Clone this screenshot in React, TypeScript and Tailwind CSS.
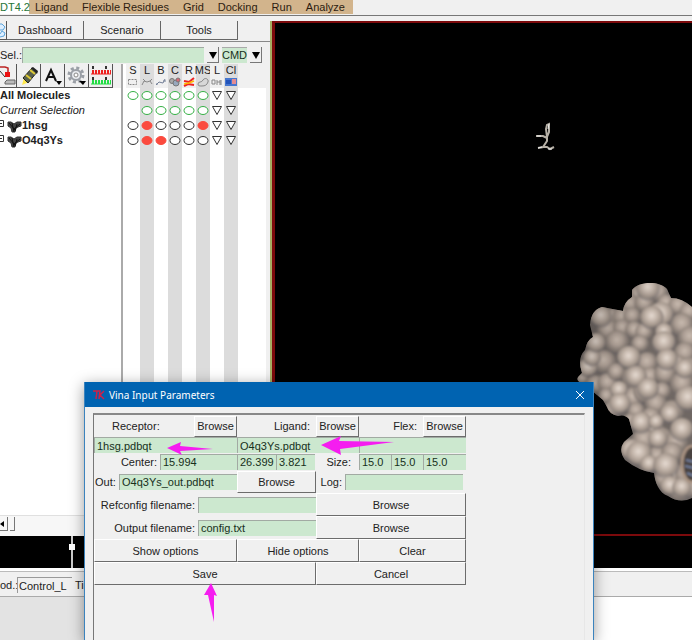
import React from "react";

const menus = ["Ligand", "Flexible Residues", "Grid", "Docking", "Run", "Analyze"];

type Mark = "none" | "green" | "open" | "red" | "tri";

const columns: { head: string; name: string; shaded: boolean; marks: Mark[] }[] = [
  { head: "S", name: "Select", shaded: false, marks: ["green", "none", "open", "open"] },
  { head: "L", name: "Lines", shaded: true, marks: ["green", "green", "red", "red"] },
  { head: "B", name: "Sticks and balls", shaded: false, marks: ["green", "green", "open", "red"] },
  { head: "C", name: "Spheres", shaded: true, marks: ["green", "green", "open", "open"] },
  { head: "R", name: "Ribbon", shaded: false, marks: ["green", "green", "open", "open"] },
  { head: "MS", name: "Surface", shaded: true, marks: ["green", "green", "red", "open"] },
  { head: "L", name: "Labels", shaded: false, marks: ["tri", "tri", "tri", "tri"] },
  { head: "Cl", name: "Color", shaded: true, marks: ["tri", "tri", "tri", "tri"] },
];

// Background lumps of the surface: x, y, radius
const lumps: number[][] = [
  [78, 24, 9], [98, 22, 10], [70, 34, 10], [84, 33, 10], [106, 33, 9], [118, 36, 10], [129, 42, 10],
  [41, 46, 11], [52, 47, 9], [62, 47, 10], [72, 46, 9], [48, 60, 11], [62, 58, 9], [74, 60, 9], [84, 62, 9],
  [36, 74, 10], [57, 72, 12], [80, 74, 9], [122, 55, 12], [130, 68, 12], [125, 83, 11],
  [44, 92, 12], [22, 109, 7], [35, 115, 10], [47, 113, 10], [56, 102, 9], [87, 93, 11], [118, 95, 10], [129, 99, 12],
  [75, 108, 13], [90, 106, 9], [105, 104, 11], [122, 114, 12], [46, 126, 8], [53, 139, 9], [73, 128, 11],
  [86, 121, 13], [102, 121, 9], [96, 134, 11], [112, 142, 12], [76, 141, 9], [71, 151, 8], [91, 147, 10],
  [94, 159, 10], [101, 170, 13], [116, 173, 12], [84, 170, 12], [89, 193, 11], [97, 186, 10], [112, 183, 11],
  [115, 206, 12], [104, 209, 10], [120, 220, 12], [130, 218, 10], [125, 205, 10],
];

// Foremost atoms
const atoms: number[][] = [
  [88, 19, 12], [101, 45, 13], [92, 48, 12], [104, 62, 9], [104, 73, 12], [69, 88, 12], [28, 98, 10], [32, 88, 9],
  [41, 47, 11], [36, 73, 10], [107, 90, 11], [76, 107, 11], [59, 120, 9], [60, 134, 11], [88, 119, 11], [125, 99, 10],
  [110, 144, 10], [81, 153, 11], [96, 152, 8], [128, 129, 13], [122, 160, 12], [98, 169, 10], [71, 180, 11],
  [79, 184, 13], [89, 194, 9], [106, 196, 13], [110, 216, 10], [122, 218, 10],
];

function ToolButton({ label, children }: { label: string; children: React.ReactNode }) {
  return (
    <button aria-label={label} className="flex h-6 w-6 shrink-0 items-center justify-center border-r border-b border-[#555] bg-[#f0f0f0]">
      {children}
    </button>
  );
}

function MarkGlyph({ mark }: { mark: Mark }) {
  if (mark === "none") return <span className="block h-[15px]" />;
  return (
    <svg viewBox="0 0 14 15" className="block h-[15px] w-[14px]">
      {mark === "tri" ? (
        <path d="M2.5 3.5h9L7 11.5z" fill="#fff" stroke="#333" />
      ) : (
        <ellipse
          cx="7" cy="7.5" rx="5" ry="4"
          fill={mark === "red" ? "#fb4a3e" : "#fff"}
          stroke={mark === "green" ? "#35b045" : mark === "red" ? "#fb4a3e" : "#333"}
        />
      )}
    </svg>
  );
}

function ColumnIcon({ index }: { index: number }) {
  return (
    <svg viewBox="0 0 14 12" className="block h-3 w-[14px]" fill="none" stroke="#888">
      {index === 0 && <rect x="2.5" y="3.5" width="8" height="5" strokeDasharray="2 1" />}
      {index === 1 && <path d="M2 9l2-4 3 1 3-1 2 3M3 3l2 2M10 5l2-2" />}
      {index === 2 && <path d="M2 9l3-3 4 1 2-4M2 8h2M9 5h3" stroke="#758198" />}
      {index === 3 && (
        <g stroke="#777"><circle cx="4" cy="5" r="2.5" fill="#aaa" /><circle cx="8" cy="7" r="3" fill="#98a8bd" /><circle cx="10" cy="4" r="2" fill="#d67" /></g>
      )}
      {index === 4 && <path d="M2 5l5 1 5-4M2 10l4-2 6 1" stroke="#e22" strokeWidth="2" />}
      {index === 4 && <path d="M2 8l5-1 5-2" stroke="#fb0" strokeWidth="1.5" />}
      {index === 5 && <path d="M2 8c0-3 4-1 5-4 2-3 6-1 5 2s-3 4-6 4-4 0-4-2z" fill="#d8d8d8" />}
      {index === 6 && <path d="M2 4h3v4H2zM7 4v5M7 6h3m0-2v5M11 4v5" />}
      {index === 7 && (
        <g stroke="none"><rect x="1" y="2" width="12" height="8" fill="#4777cf" /><rect x="2" y="4" width="5" height="4" fill="#2354ba" /><rect x="8" y="3" width="4" height="5" fill="#e48b91" /></g>
      )}
    </svg>
  );
}

function Molecule({ name }: { name: string }) {
  return (
    <div className="flex h-[15px] items-center font-bold">
      <svg viewBox="0 0 22 15" className="h-[15px] w-[22px] shrink-0">
        <path d="M0 2.5h3.5v6H0M0 5.5h2" fill="none" stroke="#333" />
        <path d="M8 4l3 0 3 2 3-2 4 0v4l-3 1-2 1-1 4-3 0-1-4-3-2z" fill="#444" stroke="#333" />
        <path d="M9 5l6 7M12 5l2 9M20 6l-6 5M17 6l-2 7" stroke="#111" fill="none" />
      </svg>
      <span>{name}</span>
    </div>
  );
}

function Field({ label, value = "", className }: { label: string; value?: string; className: string }) {
  return (
    <input
      aria-label={label}
      defaultValue={value}
      className={`h-4 min-w-0 shrink-0 border-t border-l border-[#a2aaa3] bg-[#cce8cf] px-0.5 text-[#17301b] outline-none ${className}`}
    />
  );
}

function PushButton({ children, className }: { children: React.ReactNode; className: string }) {
  return (
    <button className={`shrink-0 border-t border-l border-t-white border-l-white border-r border-b border-r-[#6c6c6c] border-b-[#6c6c6c] bg-[#f0f0f0] text-center ${className}`}>
      {children}
    </button>
  );
}

function SidePanel() {
  return (
    <aside className="flex w-[270px] shrink-0 flex-col overflow-hidden bg-[#f0f0f0]">
      <nav className="mt-[5px] flex h-[21px] shrink-0 border-b border-[#888] pb-px">
        <button aria-label="Home" className="h-[19px] w-[7px] border-r border-b border-[#555]">
          <svg viewBox="0 0 6 18" className="h-[18px] w-[6px]"><path d="M0 3h2l3 3-2 3H0M0 13l2-3 3 2-1 3-4 1" fill="#dceeff" stroke="#5ba4db" /></svg>
        </button>
        {["Dashboard", "Scenario", "Tools"].map((t) => (
          <button key={t} className="h-[19px] w-[77px] border-r border-b border-[#666]">{t}</button>
        ))}
      </nav>
      <div className="mt-[5px] flex h-4 shrink-0 items-center">
        <label htmlFor="sel" className="w-[22px] shrink-0">Sel.:</label>
        <input id="sel" className="h-4 w-[182px] border-t border-l border-[#a2aaa3] bg-[#cce8cf] px-1 outline-none" />
        <button aria-label="Recent selections" className="ml-[3px] h-4 w-3 border-r border-b border-[#777]">
          <svg viewBox="0 0 12 14" className="h-[14px] w-3"><path d="M2 4h8l-4 7z" /></svg>
        </button>
        <span className="ml-[3px] h-4 w-[25px] border-t border-[#aaa] bg-[#cce8cf] text-center leading-[14px] text-[#17301b]">CMD</span>
        <button aria-label="Commands" className="ml-[3px] h-4 w-3 border-r border-b border-[#777]">
          <svg viewBox="0 0 12 14" className="h-[14px] w-3"><path d="M2 4h8l-4 7z" /></svg>
        </button>
      </div>
      <div className="mt-px flex min-h-0 flex-1">
        <div className="flex w-[121px] shrink-0 flex-col">
          <div className="flex h-6 shrink-0">
            <button aria-label="Open molecule" className="h-6 w-[17px] shrink-0 border-r border-b border-[#555]">
              <svg viewBox="0 0 16 23" className="h-[23px] w-4" fill="none">
                <path d="M0 3h5l3 1v5" stroke="#b22" strokeWidth="1.5" />
                <rect x="5" y="8" width="5" height="5" fill="#e11" />
                <path d="M0 7l5 6" stroke="#333" />
                <path d="M5 18l2-2h8v4H5z" fill="#bbb" stroke="#666" />
              </svg>
            </button>
            <ToolButton label="Highlight">
              <svg viewBox="0 0 22 22" className="h-[22px] w-[22px]">
                <path d="M4 20l2-7 5 4z" fill="#ffe94a" />
                <path d="M5 13l9-10 5 4-9 11z" fill="#59614c" stroke="#222" />
                <path d="M8 10l5 4M12 5l5 4" stroke="#ddc936" strokeWidth="2" />
                <path d="M13 3l2-1 5 4-1 3z" fill="#222" />
              </svg>
            </ToolButton>
            <ToolButton label="Label atoms">
              <svg viewBox="0 0 22 22" className="h-[22px] w-[22px]">
                <path d="M4 16L9 5l5 11M6 12h6" fill="none" stroke="#111" strokeWidth="2" /><path d="M14 16h6l-3 4z" />
              </svg>
            </ToolButton>
            <ToolButton label="Settings">
              <svg viewBox="0 0 22 22" className="h-[22px] w-[22px]">
                <circle cx="10" cy="10" r="7" fill="none" stroke="#9a9fa6" strokeWidth="3" strokeDasharray="3 2.5" />
                <circle cx="10" cy="10" r="5" fill="#e8ebef" stroke="#9a9fa6" strokeWidth="2" />
                <circle cx="10" cy="10" r="2" fill="#fff" stroke="#888" /><path d="M13 16h7l-3 4z" />
              </svg>
            </ToolButton>
            <ToolButton label="Sequence">
              <svg viewBox="0 0 22 22" className="h-[22px] w-[22px]">
                <path d="M2 7h19" stroke="#e22" strokeWidth="4" strokeDasharray="2 1" />
                <path d="M1 9h20" stroke="#e22" /><path d="M2 17h19" stroke="#2d4" strokeWidth="4" strokeDasharray="2 1" />
                <path d="M1 19h20" stroke="#2d4" /><path d="M3 1v3M16 1v3M3 12v3M16 12v3" stroke="#333" strokeWidth="2" />
              </svg>
            </ToolButton>
          </div>
          <div className="flex-1 bg-white leading-[15px]">
            <div className="h-[15px] font-bold whitespace-nowrap">All Molecules</div>
            <div className="h-[15px] whitespace-nowrap italic">Current Selection</div>
            <Molecule name="1hsg" />
            <Molecule name="O4q3Ys" />
          </div>
        </div>
        <div className="w-0.5 shrink-0 bg-[#aaa]" />
        <div className="flex flex-1 bg-white pl-[3px]">
          <div className="flex flex-1">
            {columns.map((c, i) => (
              <div key={i} className={`flex w-[14px] flex-col items-center ${c.shaded ? "bg-[#dcdcdc]" : "bg-white"}`}>
                <div className={`flex h-6 w-[14px] shrink-0 flex-col items-center ${c.shaded ? "bg-[#dcdcdc]" : "bg-[#f0f0f0]"}`}>
                  <span className="h-3 leading-3">{c.head}</span>
                  <ColumnIcon index={i} />
                </div>
                {c.marks.map((m, r) => (
                  <button key={r} aria-label={`${c.name} ${r + 1}`} className="h-[15px] w-[14px] shrink-0"><MarkGlyph mark={m} /></button>
                ))}
              </div>
            ))}
            <div className="h-6 flex-1 bg-[#f0f0f0]" />
          </div>
          <div className="w-1 bg-[#f0f0f0]" />
        </div>
      </div>
      <div className="flex h-[21px] shrink-0 items-center border-t border-[#e0e0e0] bg-[#f7f7f7] pb-1">
        <button aria-label="Scroll left" className="h-[14px] w-2 border-r border-b border-[#777]">
          <svg viewBox="0 0 8 12" className="h-3 w-2"><path d="M4 3v6L0 6z" /></svg>
        </button>
        <span className="ml-0.5 h-[14px] w-[5px] border-r border-b border-[#777]" />
      </div>
    </aside>
  );
}

function Viewer() {
  return (
    <section aria-label="3D viewer" className="relative mt-[5px] flex-1 overflow-hidden border-t-2 border-b-2 border-l-3 border-[#7c0a0c] bg-black">
      <svg viewBox="0 0 50 50" className="absolute top-[87px] left-[245px] h-[50px] w-[50px]" fill="none">
        <path d="M27 27l-1-8 1-4 2-1 0 8-2 5 0 4-4 6-5 1M23 37l4 0 3 2 4-2M16 26l7 0 4 2" stroke="#b5afa5" strokeWidth="2" />
        <path d="M28 19l1-5M18 38l4-1M28 39h4M17 26h4" stroke="#eee" />
      </svg>
      <svg viewBox="0 0 132 240" className="absolute top-[247px] left-[285px] h-[240px] w-[132px]">
        <defs>
          <radialGradient id="lump" cx=".48" cy=".4" r=".6">
            <stop offset="0" stopColor="#c9bbb0" /><stop offset=".45" stopColor="#ab9d93" />
            <stop offset=".85" stopColor="#80766f" stopOpacity=".7" /><stop offset="1" stopColor="#565462" stopOpacity=".4" />
          </radialGradient>
          <radialGradient id="atom" cx=".48" cy=".4" r=".56">
            <stop offset="0" stopColor="#e6dbd2" /><stop offset=".4" stopColor="#c6b8ad" />
            <stop offset=".75" stopColor="#a09389" /><stop offset="1" stopColor="#6b6669" stopOpacity=".35" />
          </radialGradient>
          <linearGradient id="shade" x2="1" y2=".6">
            <stop offset="0" stopColor="#000" stopOpacity=".35" /><stop offset=".6" stopColor="#000" stopOpacity="0" />
          </linearGradient>
          <filter id="soft"><feGaussianBlur stdDeviation=".8" /></filter>
          <clipPath id="outline">
            <path d="M72 20C78 12 98 10 107 19L111 28Q122 28 132 37V228Q120 234 108 226C99 223 95 212 94 203Q79 201 65 190Q58 180 64 172L73 164 69 149Q65 144 58 146Q49 144 47 137L43 130 25 115Q14 111 19 106L22 103Q17 88 25 80Q27 70 33 67L30 55Q31 40 42 37L63 41Q64 32 72 27Z" />
          </clipPath>
        </defs>
        <g clipPath="url(#outline)">
          <rect width="132" height="240" fill="#6f6763" />
          <g filter="url(#soft)">
            {lumps.map(([x, y, r], i) => <circle key={i} cx={x} cy={y} r={r} fill="url(#lump)" />)}
            {atoms.map(([x, y, r], i) => <circle key={i} cx={x} cy={y} r={r} fill="url(#atom)" />)}
            <ellipse cx="132" cy="194" rx="10" ry="18" fill="#4a4340" stroke="#a99382" strokeWidth="3" />
            <path d="M126 190l8 2M125 196l9 2M127 203l7 3" stroke="#7381a0" strokeWidth="2" />
          </g>
          <rect width="132" height="160" fill="url(#shade)" />
        </g>
      </svg>
    </section>
  );
}

function VinaDialog() {
  return (
    <div role="dialog" aria-label="Vina Input Parameters" className="absolute top-[382px] bottom-0 left-[84px] flex w-[510px] max-w-full flex-col border-x border-[#3b83bd] bg-[#f0f0f0] shadow-[0_3px_14px_rgba(0,0,0,0.4)]">
      <header className="flex h-[25px] shrink-0 items-center bg-[#0063b1] pr-2 pl-2 text-white">
        <svg viewBox="0 0 12 10" className="h-[10px] w-3" fill="none" stroke="#cf2047" strokeWidth="1.5"><path d="M0 1h6M4 1L3 9M7 0l-1 9M11 1L7 5l4 4" /></svg>
        <h1 className="ml-1 flex-1 font-['Noto_Sans',sans-serif] text-[10px]">Vina Input Parameters</h1>
        <button aria-label="Close" className="h-3 w-[10px]">
          <svg viewBox="0 0 10 12" className="h-3 w-[10px]"><path d="M1 2l8 8M9 2l-8 8" stroke="#fff" /></svg>
        </button>
      </header>
      <form onSubmit={(e) => e.preventDefault()} className="mx-2 mt-1.5 flex-1 border-t-2 border-r border-l border-t-[#888] border-r-[#e7e7e7] border-l-[#777]">
        <div className="flex w-[372px] flex-col">
          <div className="flex h-[22px] items-center">
            <span className="w-[100px] shrink-0 pl-[18px]">Receptor:</span>
            <PushButton className="h-[21px] w-[43px]">Browse</PushButton>
            <span className="w-[79px] shrink-0 pr-1.5 text-right">Ligand:</span>
            <PushButton className="h-[21px] w-[43px]">Browse</PushButton>
            <span className="w-[64px] shrink-0 pr-1.5 text-right">Flex:</span>
            <PushButton className="h-[21px] w-[43px]">Browse</PushButton>
          </div>
          <div className="flex h-4">
            <Field label="Receptor" value="1hsg.pdbqt" className="w-[143px]" />
            <Field label="Ligand" value="O4q3Ys.pdbqt" className="w-[122px]" />
            <Field label="Flex" className="w-[107px]" />
          </div>
          <div className="flex h-[17px] items-center">
            <span className="w-[66px] shrink-0 pr-[3px] text-right">Center:</span>
            <Field label="Center x" value="15.994" className="w-[77px]" />
            <Field label="Center y" value="26.399" className="w-[39px]" />
            <Field label="Center z" value="3.821" className="w-[39px]" />
            <span className="w-[44px] shrink-0 pr-2 text-right">Size:</span>
            <Field label="Size x" value="15.0" className="w-8" />
            <Field label="Size y" value="15.0" className="w-8" />
            <Field label="Size z" value="15.0" className="w-[43px]" />
          </div>
          <div className="flex h-[23px] items-center">
            <label htmlFor="out" className="w-[25px] shrink-0 pl-px">Out:</label>
            <input id="out" defaultValue="O4q3Ys_out.pdbqt" className="h-4 w-[118px] border-t border-l border-[#a2aaa3] bg-[#cce8cf] px-0.5 text-[#17301b] outline-none" />
            <PushButton className="h-[22px] w-[79px]">Browse</PushButton>
            <label htmlFor="log" className="w-[29px] shrink-0 pr-[3px] text-right">Log:</label>
            <input id="log" className="h-4 w-[118px] border-t border-l border-[#a2aaa3] bg-[#cce8cf] px-0.5 outline-none" />
          </div>
          <div className="flex h-[23px] items-center">
            <label htmlFor="ref" className="w-[104px] shrink-0 pr-[3px] text-right whitespace-nowrap">Refconfig filename:</label>
            <input id="ref" className="h-4 w-[118px] border-t border-l border-[#a2aaa3] bg-[#cce8cf] px-0.5 outline-none" />
            <PushButton className="h-[23px] w-[150px]">Browse</PushButton>
          </div>
          <div className="flex h-[23px] items-center">
            <label htmlFor="output" className="w-[104px] shrink-0 pr-[3px] text-right whitespace-nowrap">Output filename:</label>
            <input id="output" defaultValue="config.txt" className="h-4 w-[118px] border-t border-l border-[#a2aaa3] bg-[#cce8cf] px-0.5 text-[#17301b] outline-none" />
            <PushButton className="h-[23px] w-[150px]">Browse</PushButton>
          </div>
          <div className="flex h-[23px]">
            <PushButton className="w-[143px]">Show options</PushButton>
            <PushButton className="w-[122px]">Hide options</PushButton>
            <PushButton className="w-[107px]">Clear</PushButton>
          </div>
          <div className="flex h-[23px]">
            <PushButton className="w-[222px]">Save</PushButton>
            <PushButton className="w-[150px]">Cancel</PushButton>
          </div>
        </div>
      </form>
      <svg viewBox="85 382 320 250" className="pointer-events-none absolute top-0 left-0 h-[250px] w-[320px]" fill="#f51df0">
        <path d="M167 448l14-6-1 4 33 3-33 2 2 4z" />
        <path d="M321 445l20-9-2 5 55 1-54 7 1 6z" />
        <path d="M211 583l6 13-3-1v27l-6-27h-4z" />
      </svg>
    </div>
  );
}

export default function App() {
  return (
    <div className="relative flex h-screen flex-col overflow-hidden bg-white font-['Liberation_Sans',Arial,sans-serif] text-[11px] leading-[14px] text-[#222]">
      <div className="flex h-4 shrink-0 border-b border-[#777] bg-[#f0f0f0]">
        <div className="flex h-[14px] w-[353px] items-center bg-[#d2b48c] text-[#2d1c10]">
          <button className="h-[14px] w-[29px] shrink-0 bg-white text-left whitespace-nowrap text-[#267638]">DT4.2</button>
          <nav className="flex flex-1 justify-between pr-2 pl-1.5">
            {menus.map((m) => <button key={m} className="whitespace-nowrap">{m}</button>)}
          </nav>
        </div>
      </div>
      <main className="flex min-h-0 flex-1 bg-[#f0f0f0]">
        <SidePanel />
        <div className="mt-[5px] w-0.5 shrink-0 bg-[#a5ae62]" />
        <Viewer />
      </main>
      <div aria-label="Time line" className="relative h-8 shrink-0 bg-black">
        <div className="ml-[71px] h-8 w-0.5 bg-[#ccc]" />
        <div className="absolute top-2 left-[69px] h-[6px] w-[6px] bg-white" />
      </div>
      <footer className="h-[29px] shrink-0 border-b border-[#aaa] bg-[#f0f0f0] shadow-[0_2px_8px_rgba(0,0,0,0.3)]">
        <div className="h-1 border-b border-[#bbb] bg-white" />
        <div className="mt-[5px] flex h-4 items-center">
          <label htmlFor="mod" className="w-[17px] shrink-0">od.:</label>
          <input id="mod" readOnly value="Control_L" className="h-4 w-[55px] border-t border-l border-[#999] bg-[#f0f0f0] pl-px outline-none" />
          <span className="ml-[3px]">Time:</span>
        </div>
      </footer>
      <div className="flex h-[43px] shrink-0">
        <div className="w-[84px] bg-[#e3e3e3]" />
        <div className="flex-1 bg-white" />
      </div>
      <VinaDialog />
    </div>
  );
}
